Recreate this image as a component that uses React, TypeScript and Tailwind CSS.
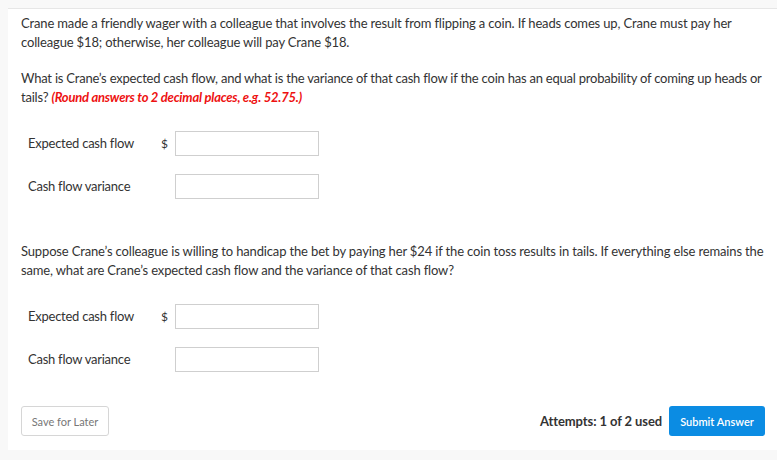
import React from "react";

function AnswerRow({ label, dollar }: { label: string; dollar?: boolean }) {
  return (
    <div className="flex items-center h-[25px] pl-[7px]">
      <span className="w-[133px] text-[13px] tracking-[-0.25px] text-[#333]">{label}</span>
      <span className="w-[14px] text-[12px] text-[#333]">{dollar ? "$" : ""}</span>
      <div className="w-[144px] h-[25px] border border-[#cfcfcf] bg-white" />
    </div>
  );
}

export default function App() {
  return (
    <div
      className="h-[460px] bg-[#f8f8f8] pl-2 pt-2"
      style={{ fontFamily: "Lato, 'Liberation Sans', sans-serif" }}
    >
      <div className="h-[442px] bg-white border-t border-[#e6e6e6] pl-[13px] pr-[8px] pt-[5px] text-[13px] leading-[19px] tracking-[-0.15px] text-[#333]">
        <p>
          Crane made a friendly wager with a colleague that involves the result from flipping a coin. If heads comes up,
          Crane must pay her colleague $18; otherwise, her colleague will pay Crane $18.
        </p>
        <p className="mt-[17px] tracking-[-0.22px]">
          What is Crane’s expected cash flow, and what is the variance of that cash flow if the coin has an equal
          probability of coming up heads or tails?{" "}
          <span className="font-bold italic text-[#ee1111]">(Round answers to 2 decimal places, e.g. 52.75.)</span>
        </p>

        <div className="mt-[24px] flex flex-col gap-[18px]">
          <AnswerRow label="Expected cash flow" dollar />
          <AnswerRow label="Cash flow variance" />
        </div>

        <p className="mt-[43px]">
          Suppose Crane’s colleague is willing to handicap the bet by paying her $24 if the coin toss results in tails. If
          everything else remains the same, what are Crane’s expected cash flow and the variance of that cash flow?
        </p>

        <div className="mt-[24px] flex flex-col gap-[18px]">
          <AnswerRow label="Expected cash flow" dollar />
          <AnswerRow label="Cash flow variance" />
        </div>

        <div className="mt-[34px] mr-[4px] flex items-center justify-between">
          <button className="h-[30px] w-[88px] rounded-[3px] border border-[#d6d6d6] bg-white text-[11px] tracking-normal text-[#777]">
            Save for Later
          </button>
          <div className="flex items-center gap-[7px]">
            <span className="text-[13px] font-bold tracking-[-0.1px] text-[#333]">Attempts: 1 of 2 used</span>
            <button className="h-[30px] w-[96px] rounded-[3px] bg-[#0b8ce3] text-[11px] font-semibold tracking-normal text-white">
              Submit Answer
            </button>
          </div>
        </div>
      </div>
    </div>
  );
}
